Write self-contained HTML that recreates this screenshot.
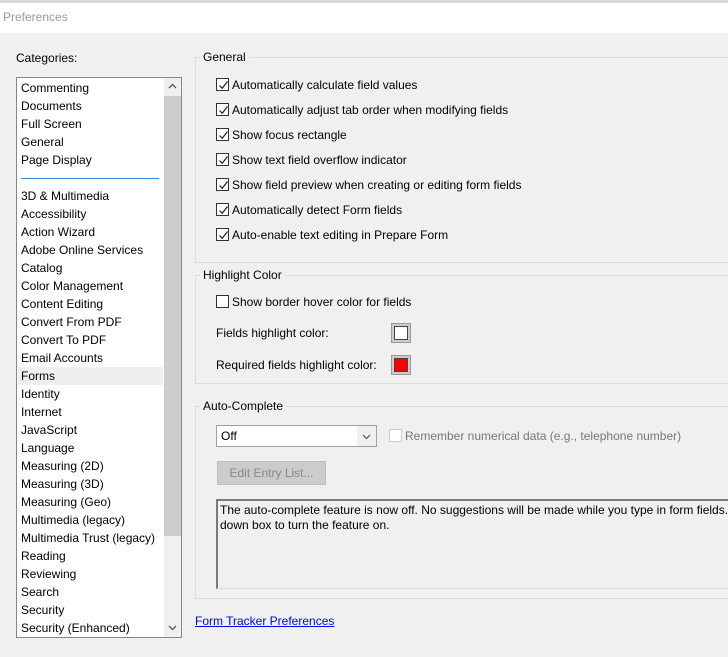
<!DOCTYPE html>
<html><head><style>
*{margin:0;padding:0;box-sizing:border-box}
html{overflow:hidden;width:728px;height:657px}
body{width:728px;height:657px;background:#f0f0f0;font-family:"Liberation Sans",sans-serif;font-size:12px;color:#000;position:relative;overflow:hidden}
.a{position:absolute;white-space:nowrap}
.grp{position:absolute;border:1px solid #dcdcdc;border-right:none}
.gl{position:absolute;background:#f0f0f0;padding:0 3px;font-size:12px}
.cb{position:absolute;width:13px;height:13px;border:1px solid #333;background:#fff}
.cb svg{position:absolute;left:1px;top:1px}
.item{position:absolute;left:4px;height:18px;line-height:18px}
</style></head><body>
<div class="a" style="left:0;top:0;width:728px;height:3px;background:#d8d8d8"></div>
<div class="a" style="left:0;top:3px;width:728px;height:30px;background:#fff"></div>
<div class="a" style="left:3px;top:10px;color:#999;font-size:12px">Preferences</div>

<div class="a" style="left:16px;top:51px">Categories:</div>
<div class="a" style="left:16px;top:77px;width:166px;height:561px;background:#fff;border:1px solid #828790;overflow:hidden">
 <div class="a" style="left:147px;top:0;width:17px;height:559px;background:#f0f0f0"></div>
 <div class="a" style="left:147px;top:18px;width:17px;height:440px;background:#cdcdcd"></div>
 <svg class="a" style="left:147px;top:0" width="17" height="17"><path d="M5 10 L8.5 6.5 L12 10" stroke="#555" stroke-width="1.3" fill="none"/></svg>
 <svg class="a" style="left:147px;top:541px" width="17" height="17"><path d="M5 7 L8.5 10.5 L12 7" stroke="#555" stroke-width="1.3" fill="none"/></svg>
 <div class="a" style="left:4px;top:100px;width:138px;height:1px;background:#3c8ad8"></div>
 <div class="a" style="left:1px;top:289px;width:145px;height:18px;background:#efefef"></div>
 <div class="item" style="top:1px">Commenting</div>
 <div class="item" style="top:19px">Documents</div>
 <div class="item" style="top:37px">Full Screen</div>
 <div class="item" style="top:55px">General</div>
 <div class="item" style="top:73px">Page Display</div>
 <div class="item" style="top:109px">3D &amp; Multimedia</div>
 <div class="item" style="top:127px">Accessibility</div>
 <div class="item" style="top:145px">Action Wizard</div>
 <div class="item" style="top:163px">Adobe Online Services</div>
 <div class="item" style="top:181px">Catalog</div>
 <div class="item" style="top:199px">Color Management</div>
 <div class="item" style="top:217px">Content Editing</div>
 <div class="item" style="top:235px">Convert From PDF</div>
 <div class="item" style="top:253px">Convert To PDF</div>
 <div class="item" style="top:271px">Email Accounts</div>
 <div class="item" style="top:289px">Forms</div>
 <div class="item" style="top:307px">Identity</div>
 <div class="item" style="top:325px">Internet</div>
 <div class="item" style="top:343px">JavaScript</div>
 <div class="item" style="top:361px">Language</div>
 <div class="item" style="top:379px">Measuring (2D)</div>
 <div class="item" style="top:397px">Measuring (3D)</div>
 <div class="item" style="top:415px">Measuring (Geo)</div>
 <div class="item" style="top:433px">Multimedia (legacy)</div>
 <div class="item" style="top:451px">Multimedia Trust (legacy)</div>
 <div class="item" style="top:469px">Reading</div>
 <div class="item" style="top:487px">Reviewing</div>
 <div class="item" style="top:505px">Search</div>
 <div class="item" style="top:523px">Security</div>
 <div class="item" style="top:541px">Security (Enhanced)</div>
</div>

<div class="grp" style="left:195px;top:57px;width:533px;height:206px"></div>
<div class="gl" style="left:200px;top:50px">General</div>
<div class="grp" style="left:195px;top:275px;width:533px;height:109px"></div>
<div class="gl" style="left:200px;top:268px">Highlight Color</div>
<div class="grp" style="left:195px;top:406px;width:533px;height:193px"></div>
<div class="gl" style="left:200px;top:399px">Auto-Complete</div>

<div class="cb" style="left:216px;top:78px"><svg width="11" height="11"><path d="M1.5 5.5 L4.2 8.3 L9.5 1.5" stroke="#222" stroke-width="1.2" fill="none"/></svg></div>
<div class="a" style="left:232px;top:78px">Automatically calculate field values</div>
<div class="cb" style="left:216px;top:103px"><svg width="11" height="11"><path d="M1.5 5.5 L4.2 8.3 L9.5 1.5" stroke="#222" stroke-width="1.2" fill="none"/></svg></div>
<div class="a" style="left:232px;top:103px">Automatically adjust tab order when modifying fields</div>
<div class="cb" style="left:216px;top:128px"><svg width="11" height="11"><path d="M1.5 5.5 L4.2 8.3 L9.5 1.5" stroke="#222" stroke-width="1.2" fill="none"/></svg></div>
<div class="a" style="left:232px;top:128px">Show focus rectangle</div>
<div class="cb" style="left:216px;top:153px"><svg width="11" height="11"><path d="M1.5 5.5 L4.2 8.3 L9.5 1.5" stroke="#222" stroke-width="1.2" fill="none"/></svg></div>
<div class="a" style="left:232px;top:153px">Show text field overflow indicator</div>
<div class="cb" style="left:216px;top:178px"><svg width="11" height="11"><path d="M1.5 5.5 L4.2 8.3 L9.5 1.5" stroke="#222" stroke-width="1.2" fill="none"/></svg></div>
<div class="a" style="left:232px;top:178px">Show field preview when creating or editing form fields</div>
<div class="cb" style="left:216px;top:203px"><svg width="11" height="11"><path d="M1.5 5.5 L4.2 8.3 L9.5 1.5" stroke="#222" stroke-width="1.2" fill="none"/></svg></div>
<div class="a" style="left:232px;top:203px">Automatically detect Form fields</div>
<div class="cb" style="left:216px;top:228px"><svg width="11" height="11"><path d="M1.5 5.5 L4.2 8.3 L9.5 1.5" stroke="#222" stroke-width="1.2" fill="none"/></svg></div>
<div class="a" style="left:232px;top:228px">Auto-enable text editing in Prepare Form</div>

<div class="cb" style="left:216px;top:295px"></div>
<div class="a" style="left:232px;top:295px">Show border hover color for fields</div>
<div class="a" style="left:216px;top:326px">Fields highlight color:</div>
<div class="a" style="left:391px;top:323px;width:20px;height:20px;background:#ccc;border:1px solid #999;padding:2px"><div style="width:14px;height:14px;background:#fff;border:1px solid #444"></div></div>
<div class="a" style="left:216px;top:358px">Required fields highlight color:</div>
<div class="a" style="left:391px;top:355px;width:20px;height:20px;background:#ccc;border:1px solid #999;padding:2px"><div style="width:14px;height:14px;background:#f00;border:1px solid #444"></div></div>

<div class="a" style="left:216px;top:425px;width:161px;height:22px;background:#fff;border:1px solid #a0a0a0"></div>
<div class="a" style="left:357px;top:426px;width:19px;height:20px;background:#f0f0f0"></div>
<svg class="a" style="left:358px;top:427px" width="17" height="18"><path d="M5 8 L8.5 11.5 L12 8" stroke="#555" stroke-width="1.2" fill="none"/></svg>
<div class="a" style="left:221px;top:429px">Off</div>
<div class="a" style="left:389px;top:429px;width:13px;height:13px;border:1px solid #ccc;background:#fff"></div>
<div class="a" style="left:405px;top:429px;color:#777">Remember numerical data (e.g., telephone number)</div>
<div class="a" style="left:217px;top:461px;width:109px;height:24px;background:#ccc;border:1px solid #bfbfbf;color:#888;text-align:center;line-height:22px">Edit Entry List...</div>

<div class="a" style="left:216px;top:499px;width:512px;height:90px;border-top:2px solid #7a7a7a;border-left:2px solid #7a7a7a;border-bottom:1px solid #ddd;overflow:hidden">
<div class="a" style="left:2px;top:2px;line-height:15px">The auto-complete feature is now off. No suggestions will be made while you type in form fields. Choose an option from the drop-<br>down box to turn the feature on.</div>
</div>

<div class="a" style="left:195px;top:614px;color:#00f;text-decoration:underline">Form Tracker Preferences</div>
</body></html>
